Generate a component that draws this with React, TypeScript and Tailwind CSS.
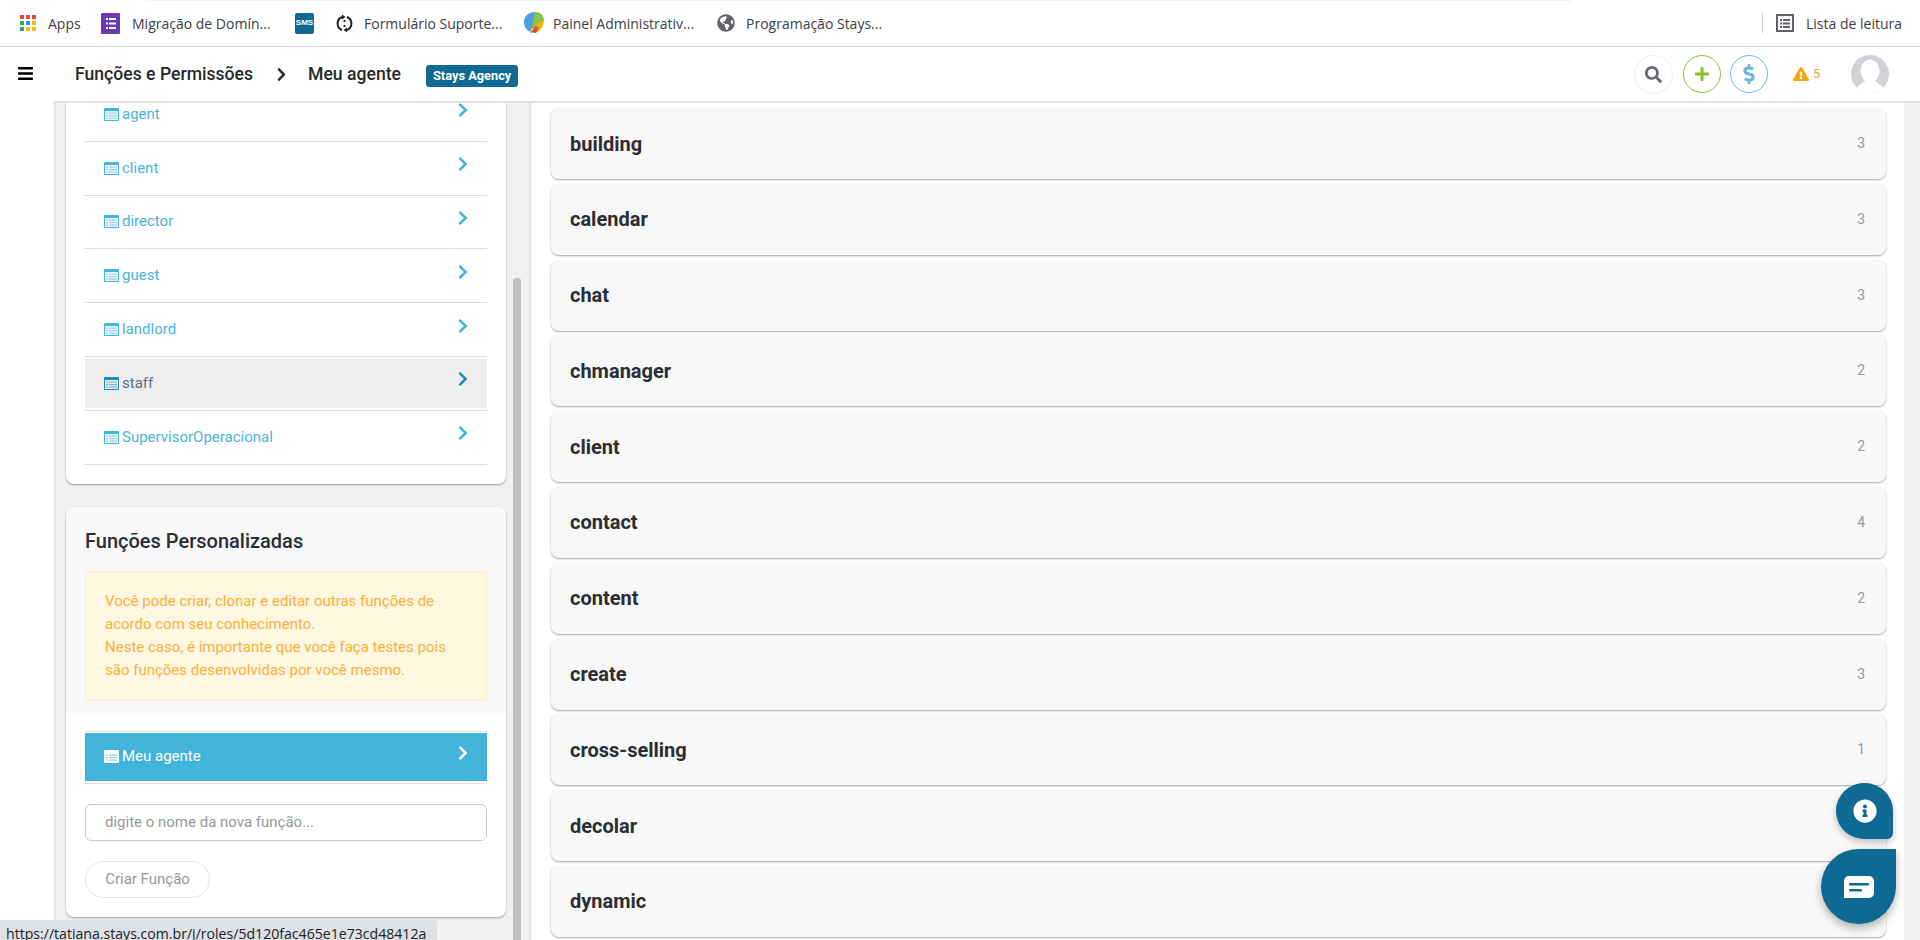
import { FaBars, FaChevronRight, FaDollarSign, FaExclamationTriangle, FaGlobeAmericas, FaInfoCircle, FaPlus, FaSearch } from "react-icons/fa";

const defaultRoles = ["agent", "client", "director", "guest", "landlord", "staff", "SupervisorOperacional"];

const modules = [
  ["building", 3],
  ["calendar", 3],
  ["chat", 3],
  ["chmanager", 2],
  ["client", 2],
  ["contact", 4],
  ["content", 2],
  ["create", 3],
  ["cross-selling", 1],
  ["decolar", 1],
  ["dynamic", 2],
] as const;

function RoleIcon({ color, lines, body }: { color: string; lines: string; body: string }) {
  return (
    <svg width="15" height="13" viewBox="0 0 15 13" className="shrink-0">
      <rect x="0" y="0" width="15" height="13" rx="1" fill={color} />
      <rect x="1" y="3" width="13" height="9" fill={body} />
      <rect x="2" y="4.5" width="2" height="1.2" fill={lines} />
      <rect x="5" y="4.5" width="8" height="1.2" fill={lines} />
      <rect x="2" y="7" width="2" height="1.2" fill={lines} />
      <rect x="5" y="7" width="8" height="1.2" fill={lines} />
      <rect x="2" y="9.5" width="2" height="1.2" fill={lines} />
      <rect x="5" y="9.5" width="8" height="1.2" fill={lines} />
    </svg>
  );
}

function RoleRow({ name, state }: { name: string; state?: "hover" | "active" }) {
  const boxClass =
    state === "active"
      ? "bg-[#42b4d9] text-white"
      : state === "hover"
        ? "bg-[#eeeeef] text-[#5d7180]"
        : "text-[#4ab4d9]";
  const chevronClass = state === "active" ? "text-white" : state === "hover" ? "text-[#2b86b3]" : "text-[#3cb1da]";
  return (
    <div
      className={
        state === "active"
          ? "h-[52px] border-b border-[#dddddd] pt-[1px] pb-[2px] flex flex-col"
          : "h-[53.8px] border-b border-[#dddddd] pt-[2px] pb-[2px] flex flex-col"
      }
    >
      <div className={`flex-1 flex items-center pl-[19px] pr-[16px] ${boxClass}`}>
        {state === "active" ? (
          <RoleIcon color="#ffffff" body="#ffffff" lines="#8ccfe8" />
        ) : state === "hover" ? (
          <RoleIcon color="#2b86b3" body="#e3eef4" lines="#7fb4d0" />
        ) : (
          <RoleIcon color="#45b5dc" body="#e8f5fa" lines="#9ad6ec" />
        )}
        <span className="ml-[3px] text-[15px] leading-none">{name}</span>
        <FaChevronRight className={`ml-auto mb-[8px] text-[16px] ${chevronClass}`} />
      </div>
    </div>
  );
}

function Bookmark({ icon, label, className }: { icon: React.ReactNode; label: string; className: string }) {
  return (
    <div className={`flex items-center ${className}`}>
      {icon}
      <span className="text-[14px] text-[#3c4043] whitespace-nowrap">{label}</span>
    </div>
  );
}

function BookmarksBar() {
  const dots = ["#e94335", "#e94335", "#e94335", "#34a853", "#4285f4", "#fbbc05", "#34a853", "#fbbc05", "#fbbc05"];
  return (
    <div className="h-[47px] shrink-0 border-b border-[#dddddd] flex items-center font-['Open_Sans',sans-serif]">
      <Bookmark
        className="ml-[20px] w-[81px]"
        label="Apps"
        icon={
          <div className="grid grid-cols-3 gap-[1.5px] w-[16px] mr-[12px]">
            {dots.map((c, i) => (
              <span key={i} className="w-[4.3px] h-[4.3px]" style={{ backgroundColor: c }} />
            ))}
          </div>
        }
      />
      <Bookmark
        className="w-[194px]"
        label="Migração de Domín..."
        icon={
          <svg width="19" height="21" viewBox="0 0 19 21" className="mr-[12px]">
            <rect width="19" height="21" rx="1" fill="#673ab7" />
            <rect x="5" y="5" width="2" height="2" fill="#fff" />
            <rect x="8" y="5" width="7" height="2" fill="#fff" />
            <rect x="5" y="9.5" width="2" height="2" fill="#fff" />
            <rect x="8" y="9.5" width="7" height="2" fill="#fff" />
            <rect x="5" y="14" width="2" height="2" fill="#fff" />
            <rect x="8" y="14" width="7" height="2" fill="#fff" />
          </svg>
        }
      />
      <div className="w-[19px] h-[21px] mr-[22px] rounded-[2px] bg-[#0e6a92] flex items-center justify-center text-[8px] font-bold text-white font-['Liberation_Sans',sans-serif]">
        SMS
      </div>
      <Bookmark
        className="w-[188px]"
        label="Formulário Suporte..."
        icon={
          <svg width="17" height="19" viewBox="0 0 17 19" className="mr-[11px]">
            <path d="M6 3 A7 7 0 0 0 6 16" fill="none" stroke="#222" strokeWidth="2" />
            <path d="M11 3 A7 7 0 0 1 11 16" fill="none" stroke="#222" strokeWidth="2" />
            <path d="M6 0.5 L9.5 3 L6 5.5 Z M11 13.5 L7.5 16 L11 18.5 Z" fill="#222" />
            <rect x="7.5" y="6" width="2" height="2" fill="#222" />
            <rect x="7.5" y="11" width="2" height="2" fill="#222" />
          </svg>
        }
      />
      <Bookmark
        className="w-[193px]"
        label="Painel Administrativ..."
        icon={
          <svg width="20" height="22" viewBox="0 0 20 22" className="mr-[9px]">
            <path d="M10 21 C3 20 0 15 0 10 C0 4 5 0 11 0 L11 8 L6 21 Z" fill="#4f9fdc" />
            <path d="M11 0 C16 0 20 3 20 8 L14 12 L7 18 Z" fill="#8bc34a" />
            <path d="M20 8 C20 13 17 19 11 21 L7 20 L14 11 Z" fill="#f4b400" />
            <path d="M11 14 L15 15 L12 21 L7 20 Z" fill="#e64a3b" />
          </svg>
        }
      />
      <Bookmark
        className=""
        label="Programação Stays..."
        icon={<FaGlobeAmericas className="text-[18px] text-[#5f6368] mr-[11px]" />}
      />
      <div className="ml-auto flex items-center">
        <div className="w-px h-[20px] bg-[#cccccc]" />
        <svg width="18" height="18" viewBox="0 0 18 18" className="ml-[13px]">
          <rect x="1" y="1" width="16" height="16" fill="none" stroke="#5f6368" strokeWidth="2" />
          <rect x="4" y="5" width="2" height="2" fill="#5f6368" />
          <rect x="7" y="5" width="7" height="2" fill="#5f6368" />
          <rect x="4" y="8.5" width="2" height="2" fill="#5f6368" />
          <rect x="7" y="8.5" width="7" height="2" fill="#5f6368" />
          <rect x="4" y="12" width="2" height="2" fill="#5f6368" />
          <rect x="7" y="12" width="7" height="2" fill="#5f6368" />
        </svg>
        <span className="ml-[12px] mr-[18px] text-[14px] text-[#3c4043]">Lista de leitura</span>
      </div>
    </div>
  );
}

function Header() {
  return (
    <div className="h-[56px] shrink-0 border-b-2 border-[#e2e2e2] flex items-center pl-[21px]">
      <span className="text-[17.6px] font-medium text-[#26292c]">Funções e Permissões</span>
      <FaChevronRight className="ml-[21px] text-[15px] text-[#26292c]" />
      <span className="ml-[19px] text-[17.6px] font-medium text-[#26292c]">Meu agente</span>
      <span className="ml-[25px] mt-[3px] h-[22px] px-[7px] rounded-[3px] bg-[#0e6a92] text-white text-[12.8px] font-bold flex items-center">
        Stays Agency
      </span>
      <div className="ml-auto flex items-center pr-[31px]">
        <div className="w-[39px] h-[39px] rounded-full border border-[#eeeeee] flex items-center justify-center">
          <FaSearch className="text-[17px] text-[#666a70]" />
        </div>
        <div className="ml-[10px] w-[38px] h-[38px] rounded-full border border-[#8cc63f] flex items-center justify-center">
          <FaPlus className="text-[16px] text-[#84c225]" />
        </div>
        <div className="ml-[9px] w-[38px] h-[38px] rounded-full border border-[#6fb8e8] flex items-center justify-center">
          <FaDollarSign className="text-[20px] text-[#6fb3e0]" />
        </div>
        <FaExclamationTriangle className="ml-[25px] text-[16px] text-[#f8a70c]" />
        <span className="ml-[4px] w-[6px] text-[13px] text-[#f5a74a]">5</span>
        <svg width="38" height="38" viewBox="0 0 38 38" className="ml-[32px]">
          <defs>
            <clipPath id="avatar">
              <circle cx="19" cy="19" r="19" />
            </clipPath>
          </defs>
          <g clipPath="url(#avatar)">
            <rect width="38" height="38" fill="#cfd3d8" />
            <ellipse cx="19" cy="16" rx="9.5" ry="11.5" fill="#ffffff" />
            <path d="M3 38 C5 30 12 29 15 25 L23 25 C26 29 33 30 35 38 Z" fill="#ffffff" />
          </g>
        </svg>
      </div>
    </div>
  );
}

function LeftColumn() {
  return (
    <div className="w-[477px] shrink-0 border-x-2 border-[#e2e2e2] bg-[#f1f1f1] flex overflow-hidden">
      <div className="w-[440px] ml-[10px] shrink-0 -mt-[15px]">
        <div className="bg-white rounded-[8px] shadow-[0_1px_2px_rgba(0,0,0,0.35)] px-[19px] pb-[19px]">
          {defaultRoles.map((role) => (
            <RoleRow key={role} name={role} state={role === "staff" ? "hover" : undefined} />
          ))}
        </div>
        <div className="mt-[23px] bg-white rounded-[8px] shadow-[0_1px_2px_rgba(0,0,0,0.35)]">
          <div className="bg-[#f9f9fb] rounded-t-[8px] px-[19px] pt-[21px] pb-[12px]">
            <h3 className="text-[20px] leading-[26px] font-medium text-[#2b2e33]">Funções Personalizadas</h3>
            <div className="mt-[17px] h-[130px] border border-[#fdebc8] bg-[#fef7e1] px-[19px] pt-[18px] text-[15px] leading-[23px] text-[#fbb03b]">
              Você pode criar, clonar e editar outras funções de
              <br />
              acordo com seu conhecimento.
              <br />
              Neste caso, é importante que você faça testes pois
              <br />
              são funções desenvolvidas por você mesmo.
            </div>
          </div>
          <div className="px-[19px] pt-[18px] pb-[19px]">
            <div className="border-t border-[#dddddd]">
              <RoleRow name="Meu agente" state="active" />
            </div>
            <input
              placeholder="digite o nome da nova função..."
              className="mt-[20px] w-full h-[37px] rounded-[6px] border border-[#c8c8c8] px-[19px] text-[15px] outline-none placeholder:text-[#999999]"
            />
            <button className="mt-[20px] block w-[125px] h-[37px] rounded-full border border-[#e5e5e5] text-[15px] text-[#999999]">
              Criar Função
            </button>
          </div>
        </div>
      </div>
      <div className="ml-[7px] mt-[175px] w-[8px] bg-[#c1c1c1] rounded-t-[3px]" />
    </div>
  );
}

function ModuleList() {
  return (
    <div className="w-[1335px] ml-[20px] mt-[5px] flex flex-col gap-[4.8px]">
      {modules.map(([name, count]) => (
        <div
          key={name}
          className="h-[71px] shrink-0 rounded-[8px] bg-[#f8f8f9] shadow-[0_1px_2px_rgba(0,0,0,0.35)] flex items-center justify-between pl-[19px] pr-[21px]"
        >
          <span className="text-[20px] font-bold text-[#2b2e33]">{name}</span>
          <span className="text-[14px] text-[#999999]">{count}</span>
        </div>
      ))}
    </div>
  );
}

export default function App() {
  return (
    <div className="relative w-[1920px] h-[940px] overflow-hidden bg-white flex flex-col font-['Roboto',sans-serif]">
      <div className="absolute left-[147px] top-0 w-[1425px] h-px bg-[#f3f3f3]" />
      <BookmarksBar />
      <div className="flex-1 flex min-h-0">
        <div className="w-[54px] shrink-0 pt-[18px] pl-[17px]">
          <FaBars className="text-[17px] text-black" />
        </div>
        <div className="flex-1 flex flex-col min-w-0">
          <Header />
          <div className="flex-1 flex min-h-0">
            <LeftColumn />
            <div className="flex-1 flex overflow-hidden">
              <ModuleList />
              <div className="ml-auto w-[16px] bg-[#f1f1f1]" />
            </div>
          </div>
        </div>
      </div>

      <div className="absolute left-0 bottom-0 w-[437px] h-[20px] bg-[#dee1e6] rounded-tr-[3px] overflow-hidden pl-[6px] text-[14.1px] leading-[20px] pt-[4px] text-[#202124] font-['Open_Sans',sans-serif] whitespace-nowrap">
        https://tatiana.stays.com.br/j/roles/5d120fac465e1e73cd48412a
      </div>

      <div className="absolute left-[1836px] top-[783px] w-[57px] h-[56px] bg-[#0e6a92] rounded-[28px] rounded-br-[6px] shadow-[0_3px_6px_rgba(0,0,0,0.25)] flex items-center justify-center">
        <FaInfoCircle className="text-[24px] text-white" />
      </div>
      <div className="absolute left-[1821px] top-[849px] w-[75px] h-[75px] bg-[#0e6a92] rounded-full rounded-tr-[6px] shadow-[0_4px_8px_rgba(0,0,0,0.3)] flex items-center justify-center">
        <svg width="30" height="22" viewBox="0 0 30 22">
          <path d="M5 0 H25 a5 5 0 0 1 5 5 V17 a5 5 0 0 1 -5 5 H0 V5 a5 5 0 0 1 5 -5 Z" fill="#ffffff" />
          <rect x="5" y="7" width="20" height="2.6" rx="1" fill="#0e6a92" />
          <rect x="5" y="13" width="13" height="2.6" rx="1" fill="#0e6a92" />
        </svg>
      </div>
    </div>
  );
}
